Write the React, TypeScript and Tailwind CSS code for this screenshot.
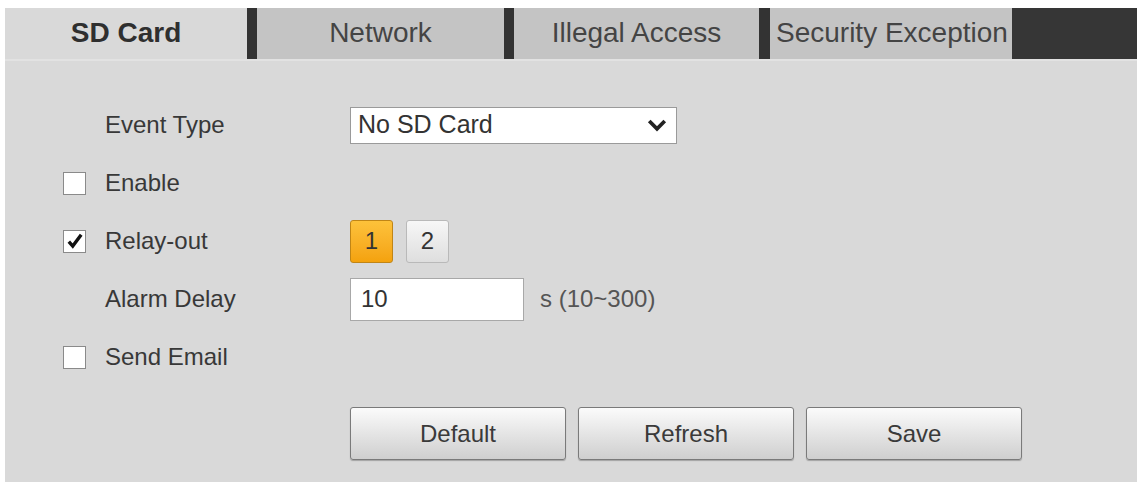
import React from "react";

const font = { fontFamily: '"Liberation Sans", Arial, sans-serif' };

const Checkbox: React.FC<{ checked?: boolean }> = ({ checked }) => (
  <span className="flex h-[23px] w-[23px] items-center justify-center border border-[#8a8a8a] bg-white">
    {checked && (
      <svg viewBox="0 0 16 16" className="h-[18px] w-[18px]">
        <path d="M2.5 8.5 L6 12.5 L13.5 2.5" fill="none" stroke="#111" strokeWidth="3" strokeLinejoin="miter" />
      </svg>
    )}
  </span>
);

const Row: React.FC<{ check?: "on" | "off"; label: string; children?: React.ReactNode }> = ({ check, label, children }) => (
  <div className="flex h-[58px] items-center">
    <div className="w-[42px]">{check && <Checkbox checked={check === "on"} />}</div>
    <div className="w-[245px] text-[24px] text-[#383838]">{label}</div>
    <div className="flex items-center">{children}</div>
  </div>
);

const App: React.FC = () => {
  return (
    <div className="h-[487px] w-[1140px] bg-white pl-[5px] pr-[3px] pt-[8px] pb-[5px]" style={font}>
      <div className="flex h-full flex-col bg-[#d9d9d9]">
        {/* Tabs */}
        <div className="flex h-[51px] text-[28px] leading-none">
          <div className="flex w-[242px] items-center justify-center pb-[2px] font-bold text-[#2f2f2f]">SD Card</div>
          <div className="w-[10px] bg-[#333333]" />
          <div className="flex w-[247px] items-center justify-center bg-[#c4c4c4] pb-[2px] text-[#444]">Network</div>
          <div className="w-[10px] bg-[#333333]" />
          <div className="flex w-[245px] items-center justify-center bg-[#c4c4c4] pb-[2px] text-[#444]">Illegal Access</div>
          <div className="w-[11px] bg-[#333333]" />
          <div className="flex w-[242px] items-center overflow-visible whitespace-nowrap bg-[#c4c4c4] pb-[2px] pl-[6px] text-[#444]">
            Security Exception
          </div>
          <div className="flex-1 bg-[#363636]" />
        </div>
        <div className="h-[2px] bg-[#e2e2e2]" />

        {/* Form */}
        <div className="flex flex-col pl-[58px] pt-[35px]">
          <Row label="Event Type">
            <div className="flex h-[37px] w-[327px] items-center justify-between border border-[#9a9a9a] bg-white pl-[7px] pr-[9px] text-[25px] text-[#333]">
              <span>No SD Card</span>
              <svg viewBox="0 0 16 16" className="h-[20px] w-[20px]">
                <path d="M1.8 4.8 L8 11 L14.2 4.8" fill="none" stroke="#222" strokeWidth="3" />
              </svg>
            </div>
          </Row>
          <Row check="off" label="Enable" />
          <Row check="on" label="Relay-out">
            <div className="flex gap-[13px]">
              <span className="flex h-[43px] w-[43px] items-center justify-center rounded-[3px] border border-[#c08516] bg-gradient-to-b from-[#fdc23a] to-[#f4a20c] text-[24px] text-[#333]">
                1
              </span>
              <span className="flex h-[43px] w-[43px] items-center justify-center rounded-[3px] border border-[#b9b9b9] bg-gradient-to-b from-[#f7f7f7] to-[#dedede] text-[24px] text-[#333]">
                2
              </span>
            </div>
          </Row>
          <Row label="Alarm Delay">
            <div className="flex h-[43px] w-[174px] items-center border border-[#a8a8a8] bg-white pl-[10px] text-[24px] text-[#333]">
              10
            </div>
            <span className="ml-[16px] text-[24px] text-[#555]">s (10~300)</span>
          </Row>
          <Row check="off" label="Send Email" />

          {/* Buttons */}
          <div className="mt-[21px] flex gap-[12px] pl-[287px]">
            {["Default", "Refresh", "Save"].map((b) => (
              <button
                key={b}
                className="flex h-[53px] w-[216px] items-center justify-center rounded-[3px] border border-[#7a7a7a] bg-gradient-to-b from-[#fbfbfb] to-[#cfcfcf] text-[24px] text-[#3a3a3a] shadow-[0_1px_1px_rgba(0,0,0,0.25)]"
                style={font}
              >
                {b}
              </button>
            ))}
          </div>
        </div>
      </div>
    </div>
  );
};

export default App;
